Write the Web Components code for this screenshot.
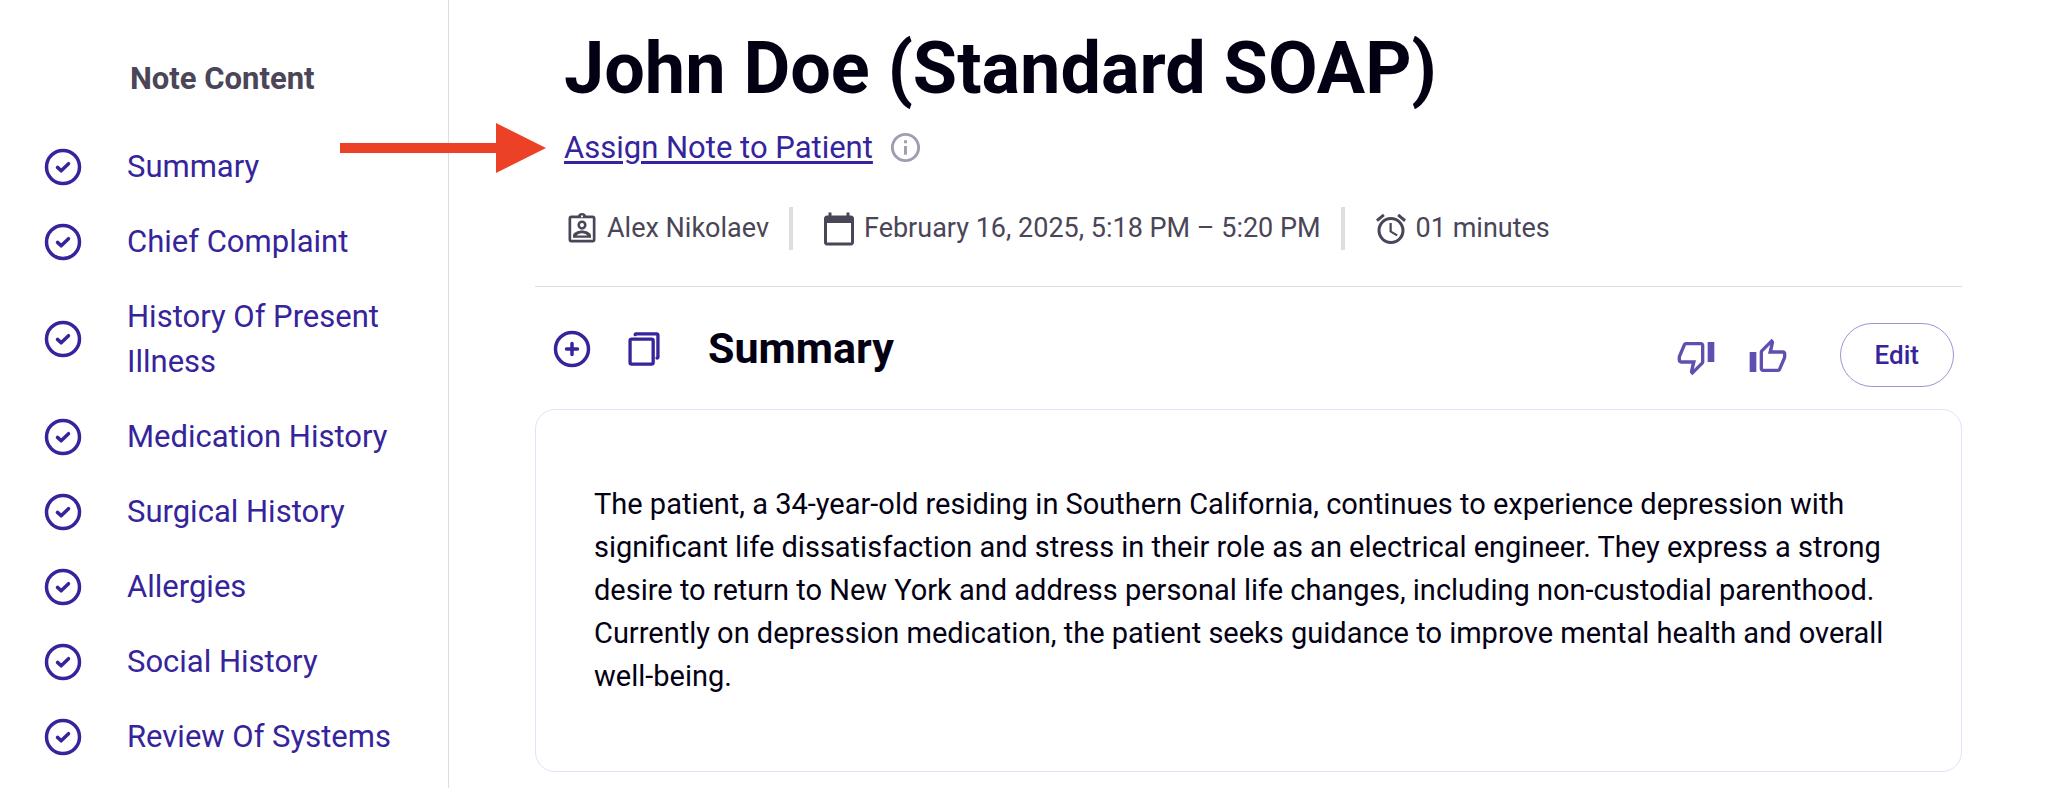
<!DOCTYPE html>
<html lang="en">
<head>
<meta charset="utf-8">
<title>John Doe (Standard SOAP)</title>
<style>
  html { --brand: #35249b; --ink: #030014; --muted: #4a4658; --rule: #dedede; --card: #e4e0f8; }
  body { margin: 0; background: #fff; color: var(--ink); font-family: Roboto, "Open Sans", sans-serif; font-size: 31px; }
</style>
</head>
<body>
<note-app></note-app>
<script>
const icons = {
  check: '<circle cx="12" cy="12" r="9" fill="none" stroke="currentColor" stroke-width="1.9"/><path d="M9 12.2l2 1.9 4-3.9" fill="none" stroke="currentColor" stroke-width="1.9" stroke-linecap="round" stroke-linejoin="round"/>',
  plus: '<circle cx="12" cy="12" r="9" fill="none" stroke="currentColor" stroke-width="1.9"/><path d="M12 9v6M9 12h6" fill="none" stroke="currentColor" stroke-width="1.9" stroke-linecap="round"/>',
  copy: '<rect x="4.4" y="6.6" width="12.6" height="13.6" rx="0.9" fill="none" stroke="currentColor" stroke-width="1.8"/><path d="M7.2 4.2V4.1a.4.4 0 0 1 .4-.4H19a.6.6 0 0 1 .6.6V16.5a.4.4 0 0 1-.4.4h-.1" fill="none" stroke="currentColor" stroke-width="1.8" stroke-linecap="round"/>',
  info: '<path fill="currentColor" d="M11 7h2v2h-2zm0 4h2v6h-2zm1-9C6.480 2 2 6.480 2 12s4.480 10 10 10 10-4.480 10-10S17.520 2 12 2zm0 18c-4.410 0-8-3.590-8-8s3.590-8 8-8 8 3.590 8 8-3.590 8-8 8z"/>',
  badge: '<rect x="3.900" y="3.900" width="16.200" height="16.200" rx="1.100" fill="none" stroke="currentColor" stroke-width="1.800"/><path d="M9.200 3.500a2.900 2.900 0 0 1 5.600 0z" fill="currentColor"/><circle cx="12" cy="3.600" r=".7" fill="#fff"/><circle cx="12" cy="9.400" r="2.200" fill="none" stroke="currentColor" stroke-width="1.700"/><path fill="currentColor" fill-rule="evenodd" d="M6 17.900v-1.400c0-2.100 3.300-3.500 6-3.500s6 1.400 6 3.500v1.400zM8.300 16.300h7.400c-.6-.8-2.200-1.500-3.700-1.500s-3.100.7-3.700 1.500z"/>',
  calendar: '<path fill="currentColor" d="M20 3h-1V1h-2v2H7V1H5v2H4c-1.100 0-2 .9-2 2v16c0 1.100.9 2 2 2h16c1.100 0 2-.9 2-2V5c0-1.100-.9-2-2-2zm0 18H4V8h16v13z"/>',
  alarm: '<path fill="currentColor" d="M22 5.720l-4.600-3.860-1.290 1.530 4.600 3.860L22 5.720zM7.880 3.390L6.600 1.860 2 5.710l1.290 1.530 4.590-3.850zM12.500 8H11v6l4.750 2.850.75-1.230-4-2.370V8zM12 4c-4.970 0-9 4.030-9 9s4.020 9 9 9a9 9 0 0 0 0-18zm0 16c-3.870 0-7-3.130-7-7s3.130-7 7-7 7 3.130 7 7-3.130 7-7 7z"/>',
  up: '<path fill="currentColor" d="M9 21h9c.83 0 1.540-.5 1.840-1.220l3.020-7.050c.09-.23.140-.47.140-.73v-2c0-1.100-.9-2-2-2h-6.310l.95-4.570.03-.32c0-.41-.17-.79-.44-1.060L14.170 1 7.580 7.590C7.220 7.950 7 8.450 7 9v10c0 1.100.9 2 2 2zM9 9l4.340-4.340L12 10h9v2l-3 7H9V9zM1 9h4v12H1z"/>',
  down: '<path fill="currentColor" d="M15 3H6c-.83 0-1.540.5-1.840 1.220l-3.020 7.050c-.09.23-.14.47-.14.730v2c0 1.100.9 2 2 2h6.310l-.95 4.570-.03.320c0 .41.170.79.440 1.060L9.830 23l6.590-6.590c.36-.36.58-.86.58-1.410V5c0-1.100-.9-2-2-2zm0 12l-4.340 4.340L12 14H3v-2l3-7h9v10zm4-12h4v12h-4z"/>'
};

class NoteIcon extends HTMLElement {
  connectedCallback() {
    this.attachShadow({ mode: 'open' }).innerHTML = `
      <style>
        :host { display: block; flex: none; width: var(--size, 36px); height: var(--size, 36px); }
        svg { display: block; width: 100%; height: 100%; }
      </style>
      <svg viewBox="0 0 24 24" aria-hidden="true">${icons[this.getAttribute('name')]}</svg>`;
  }
}

class NavItem extends HTMLElement {
  connectedCallback() {
    this.attachShadow({ mode: 'open' }).innerHTML = `
      <style>
        :host { display: block; }
        a { display: grid; grid-template-columns: 44px 1fr; gap: 42px; align-items: center; padding: 15px 40px 15px 41px;
            color: var(--brand); line-height: 45px; text-decoration: none; }
        note-icon { --size: 44px; }
      </style>
      <a href="#"><note-icon name="check"></note-icon><span><slot></slot></span></a>`;
  }
}

class NoteSidebar extends HTMLElement {
  connectedCallback() {
    this.attachShadow({ mode: 'open' }).innerHTML = `
      <style>
        :host { display: block; border-right: 1px solid var(--rule); }
        h2 { margin: 0; padding: 56px 16px 28px 130px; font-size: 31px; line-height: 45px; font-weight: 700; color: var(--muted); }
      </style>
      <h2>Note Content</h2>
      <nav aria-label="Note Content">
        <nav-item>Summary</nav-item>
        <nav-item>Chief Complaint</nav-item>
        <nav-item>History Of Present Illness</nav-item>
        <nav-item>Medication History</nav-item>
        <nav-item>Surgical History</nav-item>
        <nav-item>Allergies</nav-item>
        <nav-item>Social History</nav-item>
        <nav-item>Review Of Systems</nav-item>
      </nav>`;
  }
}

class MetaItem extends HTMLElement {
  connectedCallback() {
    this.attachShadow({ mode: 'open' }).innerHTML = `
      <style>
        :host { display: flex; align-items: center; gap: 7px; color: var(--muted); font-size: 27px; line-height: 43px; }
      </style>
      <note-icon name="${this.getAttribute('icon')}"></note-icon><span><slot></slot></span>`;
  }
}

class NoteHeader extends HTMLElement {
  connectedCallback() {
    this.attachShadow({ mode: 'open' }).innerHTML = `
      <style>
        :host { display: block; padding: 26px 29px 36px; border-bottom: 1px solid var(--rule); }
        h1 { margin: 0; font-size: 72px; line-height: 86px; font-weight: 700; }
        .assign { display: flex; align-items: center; gap: 15px; position: relative; width: fit-content; margin-top: 13px; }
        a { color: var(--brand); font-size: 31px; line-height: 45px; text-decoration-thickness: 3px; text-underline-offset: 3px; }
        .assign note-icon { --size: 35px; color: #a19db1; }
        .arrow { position: absolute; right: calc(100% + 18px); top: -2px; width: 206px; height: 50px; }
        .meta { display: flex; margin-top: 37px; }
        meta-item + meta-item { margin-left: 20px; padding-left: 28px; border-left: 4px solid var(--rule); }
      </style>
      <h1>John Doe (Standard SOAP)</h1>
      <div class="assign">
        <a href="#">Assign Note to Patient</a>
        <note-icon name="info"></note-icon>
        <svg class="arrow" viewBox="0 0 206 50" aria-hidden="true"><path d="M0 20H156V0L206 25L156 50V30H0z" fill="#ea4127"/></svg>
      </div>
      <div class="meta">
        <meta-item icon="badge">Alex Nikolaev</meta-item>
        <meta-item icon="calendar">February 16, 2025, 5:18 PM – 5:20 PM</meta-item>
        <meta-item icon="alarm">01 minutes</meta-item>
      </div>`;
  }
}

class NoteSection extends HTMLElement {
  connectedCallback() {
    this.attachShadow({ mode: 'open' }).innerHTML = `
      <style>
        :host { display: block; }
        header { display: flex; align-items: center; padding: 36px 8px 22px 15px; }
        .tools, .votes { display: flex; }
        .tools { gap: 28px; color: var(--brand); --size: 44px; margin-bottom: 12px; }
        .votes { gap: 32px; margin: 4px 52px 0 auto; color: #5e4fb0; --size: 40px; }
        h2 { margin: 0 0 14px 42px; font-size: 43px; line-height: 48px; font-weight: 700; }
        button { appearance: none; display: block; padding: 0; border: 0; background: none; color: inherit; font: inherit; }
        .edit { box-sizing: border-box; height: 64px; padding: 0 34px; border: 1px solid #9f94d2; border-radius: 32px; color: var(--brand); font-size: 26px; font-weight: 500; }
        .card { border: 1px solid var(--card); border-radius: 20px; padding: 73px 58px; }
        p { margin: 0; font-size: 29px; line-height: 43px; }
      </style>
      <header>
        <div class="tools">
          <button aria-label="Add"><note-icon name="plus"></note-icon></button>
          <button aria-label="Copy"><note-icon name="copy"></note-icon></button>
        </div>
        <h2>${this.getAttribute('heading')}</h2>
        <div class="votes">
          <button aria-label="Thumbs down"><note-icon name="down"></note-icon></button>
          <button aria-label="Thumbs up"><note-icon name="up"></note-icon></button>
        </div>
        <button class="edit">Edit</button>
      </header>
      <div class="card"><p><slot></slot></p></div>`;
  }
}

class NoteApp extends HTMLElement {
  connectedCallback() {
    this.attachShadow({ mode: 'open' }).innerHTML = `
      <style>
        :host { display: grid; grid-template-columns: 449px 1fr; min-height: 100vh; }
        main { min-width: 0; padding: 0 102px 16px 86px; }
      </style>
      <note-sidebar></note-sidebar>
      <main>
        <note-header></note-header>
        <note-section heading="Summary">The patient, a 34-year-old residing in Southern California, continues to experience depression with significant life dissatisfaction and stress in their role as an electrical engineer. They express a strong desire to return to New York and address personal life changes, including non-custodial parenthood. Currently on depression medication, the patient seeks guidance to improve mental health and overall well-being.</note-section>
      </main>`;
  }
}

customElements.define('note-icon', NoteIcon);
customElements.define('nav-item', NavItem);
customElements.define('note-sidebar', NoteSidebar);
customElements.define('meta-item', MetaItem);
customElements.define('note-header', NoteHeader);
customElements.define('note-section', NoteSection);
customElements.define('note-app', NoteApp);
</script>
</body>
</html>
